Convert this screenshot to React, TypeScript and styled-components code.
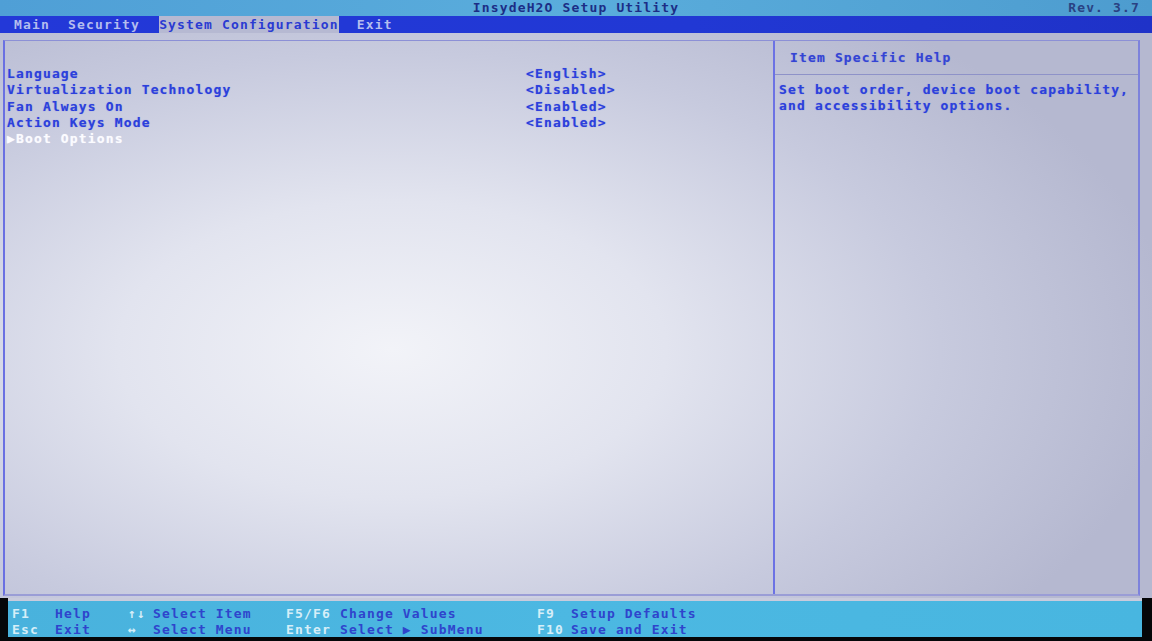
import React from "react";
import styled, { createGlobalStyle } from "styled-components";

const Global = createGlobalStyle`
  html, body { margin: 0; padding: 0; background: #050608; }
  body { font-family: "DejaVu Sans Mono", "Liberation Mono", monospace; }
  * { box-sizing: border-box; }
`;

const Screen = styled.div`
  width: 1152px;
  height: 641px;
  display: flex;
  flex-direction: column;
  background: #050608;
  overflow: hidden;
  font-family: "DejaVu Sans Mono", "Liberation Mono", monospace;
  font-weight: bold;
  font-size: 13px;
  letter-spacing: 1.15px;
`;

const TitleBar = styled.div`
  height: 16px;
  flex: none;
  display: flex;
  align-items: center;
  justify-content: center;
  position: relative;
  background: linear-gradient(90deg, #4f9fd6 0%, #5aaddc 50%, #4d9ccf 100%);
  color: #1c2d86;
  line-height: 16px;
`;

const Rev = styled.span`
  position: absolute;
  right: 12px;
  top: 0;
  color: #243276;
  opacity: 0.85;
`;

const MenuBar = styled.div`
  height: 17px;
  flex: none;
  display: flex;
  align-items: center;
  gap: 18.2px;
  padding-left: 14px;
  background: linear-gradient(90deg, #2338d8 0%, #2138d4 60%, #1f32c8 100%);
  line-height: 17px;
`;

const MenuItem = styled.span<{ $active?: boolean }>`
  display: inline-block;
  height: 17px;
  color: ${(p) => (p.$active ? "#2a3bd2" : "#b4bdee")};
  background: ${(p) => (p.$active ? "#b6b9d2" : "transparent")};
  margin-left: ${(p) => (p.$active ? "1px" : "0")};
`;

const Body = styled.div`
  flex: 1;
  display: flex;
  padding: 7px 12px 2px 3px;
  background: radial-gradient(
    ellipse 68% 75% at 34% 56%,
    #f2f3f8 0%,
    #e2e4ef 35%,
    #c7cade 70%,
    #b5b8d0 100%
  );
`;

const Frame = styled.div`
  flex: 1;
  display: grid;
  grid-template-columns: 768px 1fr;
  border: 1px solid #8c90d6;
  border-left: 2px solid #6a70e2;
  border-right: 2px solid #7d82dc;
  border-bottom: 2px solid #9a9dd6;
`;

const LeftPanel = styled.div`
  padding: 25px 0 0 2px;
  display: flex;
  flex-direction: column;
`;

const Row = styled.div`
  display: grid;
  grid-template-columns: 519px auto;
  height: 16.3px;
  line-height: 16.3px;
  color: #2c40dc;
  text-shadow: 0 0 1px rgba(44, 64, 220, 0.45);
`;

const Label = styled.span<{ $selected?: boolean }>`
  color: ${(p) => (p.$selected ? "#fbfbff" : "#2c40dc")};
  text-shadow: ${(p) =>
    p.$selected ? "0 0 1px rgba(255,255,255,0.6)" : "0 0 1px rgba(44,64,220,0.45)"};
  white-space: pre;
`;

const Value = styled.span`
  white-space: pre;
`;

const HelpPanel = styled.div`
  border-left: 2px solid #6c72e4;
  display: flex;
  flex-direction: column;
`;

const HelpHeader = styled.div`
  height: 34px;
  padding: 9px 0 0 15px;
  line-height: 16px;
  color: #3444d4;
  border-bottom: 1px solid #8e92c8;
  text-shadow: 0 0 1px rgba(44, 64, 220, 0.4);
`;

const HelpText = styled.div`
  padding: 7px 0 0 4px;
  line-height: 16.2px;
  color: #2c40dc;
  white-space: pre;
  text-shadow: 0 0 1px rgba(44, 64, 220, 0.45);
`;

const Footer = styled.div`
  height: 39px;
  flex: none;
  margin: 0 10px 4px 8px;
  padding: 5px 0 0 4px;
  background: linear-gradient(90deg, #49b2dd 0%, #4cb8e2 50%, #48b6e0 100%);
  display: grid;
  grid-template-columns: 43px 73px 25px 133px 54px 197px 34px auto;
  grid-auto-rows: 16.3px;
  line-height: 16.3px;
  border-top: 3px solid #c9cbdc;
`;

const Key = styled.span`
  color: #d6eef8;
  white-space: pre;
`;

const Desc = styled.span`
  color: #2f44cc;
  white-space: pre;
`;

const rows = [
  { label: "Language", value: "<English>" },
  { label: "Virtualization Technology", value: "<Disabled>" },
  { label: "Fan Always On", value: "<Enabled>" },
  { label: "Action Keys Mode", value: "<Enabled>" },
  { label: "▶Boot Options", value: "", selected: true },
];

const footer = [
  ["F1", "Help", "↑↓", "Select Item", "F5/F6", "Change Values", "F9", "Setup Defaults"],
  ["Esc", "Exit", "↔", "Select Menu", "Enter", "Select ▶ SubMenu", "F10", "Save and Exit"],
];

export default function App() {
  return (
    <>
      <Global />
      <Screen>
        <TitleBar>
          InsydeH2O Setup Utility
          <Rev>Rev. 3.7</Rev>
        </TitleBar>
        <MenuBar>
          <MenuItem>Main</MenuItem>
          <MenuItem>Security</MenuItem>
          <MenuItem $active>System Configuration</MenuItem>
          <MenuItem>Exit</MenuItem>
        </MenuBar>
        <Body>
          <Frame>
            <LeftPanel>
              {rows.map((r) => (
                <Row key={r.label}>
                  <Label $selected={r.selected}>{r.label}</Label>
                  <Value>{r.value}</Value>
                </Row>
              ))}
            </LeftPanel>
            <HelpPanel>
              <HelpHeader>Item Specific Help</HelpHeader>
              <HelpText>
                {"Set boot order, device boot capability,\nand accessibility options."}
              </HelpText>
            </HelpPanel>
          </Frame>
        </Body>
        <Footer>
          {footer.map((line, i) =>
            line.map((t, j) =>
              j % 2 === 0 ? (
                <Key key={`${i}-${j}`}>{t}</Key>
              ) : (
                <Desc key={`${i}-${j}`}>{t}</Desc>
              )
            )
          )}
        </Footer>
      </Screen>
    </>
  );
}
